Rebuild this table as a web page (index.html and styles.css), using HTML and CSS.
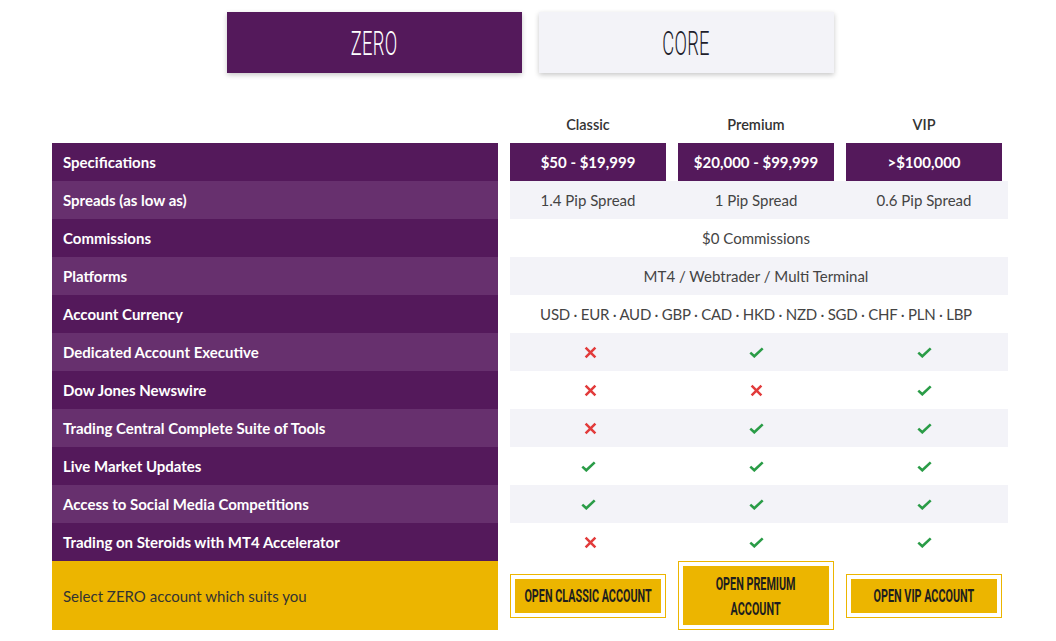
FILE: index.html
```html
<!DOCTYPE html>
<html>
<head>
<meta charset="utf-8">
<link rel="stylesheet" href="styles.css">
</head>
<body>
<div class="page">
  <div class="tabs">
    <div class="tab tab-active"><span class="tab-text">ZERO</span></div>
    <div class="tab"><span class="tab-text">CORE</span></div>
  </div>

  <div class="table">
    <div class="row row-head">
      <div class="label label-blank"></div>
      <div class="cells">
        <div class="cell">Classic</div>
        <div class="cell">Premium</div>
        <div class="cell">VIP</div>
      </div>
    </div>

    <div class="row row-spec">
      <div class="label">Specifications</div>
      <div class="cells">
        <div class="cell cell-spec">$50 - $19,999</div>
        <div class="cell cell-spec">$20,000 - $99,999</div>
        <div class="cell cell-spec">&gt;$100,000</div>
      </div>
    </div>

    <div class="row row-alt">
      <div class="label">Spreads (as low as)</div>
      <div class="cells">
        <div class="cell">1.4 Pip Spread</div>
        <div class="cell">1 Pip Spread</div>
        <div class="cell">0.6 Pip Spread</div>
      </div>
    </div>

    <div class="row">
      <div class="label">Commissions</div>
      <div class="cells">
        <div class="cell cell-span">$0 Commissions</div>
      </div>
    </div>

    <div class="row row-alt">
      <div class="label">Platforms</div>
      <div class="cells">
        <div class="cell cell-span">MT4 / Webtrader / Multi Terminal</div>
      </div>
    </div>

    <div class="row">
      <div class="label">Account Currency</div>
      <div class="cells">
        <div class="cell cell-span cell-cur">USD · EUR · AUD · GBP · CAD · HKD · NZD · SGD · CHF · PLN · LBP</div>
      </div>
    </div>

    <div class="row row-alt">
      <div class="label">Dedicated Account Executive</div>
      <div class="cells">
        <div class="cell"><svg class="ic-x" viewBox="0 0 13 13"><path d="M1.6 1.6L11.4 11.4M11.4 1.6L1.6 11.4"/></svg></div>
        <div class="cell"><svg class="ic-ok" viewBox="0 0 15 11"><path d="M1.3 5.6L5.3 9.3L13.7 1.4"/></svg></div>
        <div class="cell"><svg class="ic-ok" viewBox="0 0 15 11"><path d="M1.3 5.6L5.3 9.3L13.7 1.4"/></svg></div>
      </div>
    </div>

    <div class="row">
      <div class="label">Dow Jones Newswire</div>
      <div class="cells">
        <div class="cell"><svg class="ic-x" viewBox="0 0 13 13"><path d="M1.6 1.6L11.4 11.4M11.4 1.6L1.6 11.4"/></svg></div>
        <div class="cell"><svg class="ic-x" viewBox="0 0 13 13"><path d="M1.6 1.6L11.4 11.4M11.4 1.6L1.6 11.4"/></svg></div>
        <div class="cell"><svg class="ic-ok" viewBox="0 0 15 11"><path d="M1.3 5.6L5.3 9.3L13.7 1.4"/></svg></div>
      </div>
    </div>

    <div class="row row-alt">
      <div class="label">Trading Central Complete Suite of Tools</div>
      <div class="cells">
        <div class="cell"><svg class="ic-x" viewBox="0 0 13 13"><path d="M1.6 1.6L11.4 11.4M11.4 1.6L1.6 11.4"/></svg></div>
        <div class="cell"><svg class="ic-ok" viewBox="0 0 15 11"><path d="M1.3 5.6L5.3 9.3L13.7 1.4"/></svg></div>
        <div class="cell"><svg class="ic-ok" viewBox="0 0 15 11"><path d="M1.3 5.6L5.3 9.3L13.7 1.4"/></svg></div>
      </div>
    </div>

    <div class="row">
      <div class="label">Live Market Updates</div>
      <div class="cells">
        <div class="cell"><svg class="ic-ok" viewBox="0 0 15 11"><path d="M1.3 5.6L5.3 9.3L13.7 1.4"/></svg></div>
        <div class="cell"><svg class="ic-ok" viewBox="0 0 15 11"><path d="M1.3 5.6L5.3 9.3L13.7 1.4"/></svg></div>
        <div class="cell"><svg class="ic-ok" viewBox="0 0 15 11"><path d="M1.3 5.6L5.3 9.3L13.7 1.4"/></svg></div>
      </div>
    </div>

    <div class="row row-alt">
      <div class="label">Access to Social Media Competitions</div>
      <div class="cells">
        <div class="cell"><svg class="ic-ok" viewBox="0 0 15 11"><path d="M1.3 5.6L5.3 9.3L13.7 1.4"/></svg></div>
        <div class="cell"><svg class="ic-ok" viewBox="0 0 15 11"><path d="M1.3 5.6L5.3 9.3L13.7 1.4"/></svg></div>
        <div class="cell"><svg class="ic-ok" viewBox="0 0 15 11"><path d="M1.3 5.6L5.3 9.3L13.7 1.4"/></svg></div>
      </div>
    </div>

    <div class="row">
      <div class="label">Trading on Steroids with MT4 Accelerator</div>
      <div class="cells">
        <div class="cell"><svg class="ic-x" viewBox="0 0 13 13"><path d="M1.6 1.6L11.4 11.4M11.4 1.6L1.6 11.4"/></svg></div>
        <div class="cell"><svg class="ic-ok" viewBox="0 0 15 11"><path d="M1.3 5.6L5.3 9.3L13.7 1.4"/></svg></div>
        <div class="cell"><svg class="ic-ok" viewBox="0 0 15 11"><path d="M1.3 5.6L5.3 9.3L13.7 1.4"/></svg></div>
      </div>
    </div>

    <div class="row row-foot">
      <div class="label label-foot">Select ZERO account which suits you</div>
      <div class="cells">
        <div class="btn-wrap"><a class="btn"><span class="btn-text">OPEN CLASSIC ACCOUNT</span></a></div>
        <div class="btn-wrap btn-wrap-tall"><a class="btn"><span class="btn-text">OPEN PREMIUM<br>ACCOUNT</span></a></div>
        <div class="btn-wrap"><a class="btn"><span class="btn-text">OPEN VIP ACCOUNT</span></a></div>
      </div>
    </div>
  </div>
</div>
</body>
</html>
```

FILE: styles.css
```css
* { box-sizing: border-box; }

body {
  margin: 0;
  background: #ffffff;
  font-family: "Lato", "Open Sans", sans-serif;
  color: #444444;
}

.page {
  width: 956px;
  margin-left: 52px;
}

.tabs {
  display: flex;
  justify-content: center;
  gap: 17px;
  padding-top: 12px;
}

.tab {
  width: 295px;
  height: 61px;
  background: #f3f3f8;
  box-shadow: 0 2px 5px rgba(0, 0, 0, 0.22);
  display: flex;
  align-items: center;
  justify-content: center;
  color: #1d1d2b;
}

.tab-active {
  background: #54195b;
  color: #ffffff;
}

.tab-text {
  display: inline-block;
  font-family: "Roboto", sans-serif;
  font-weight: 300;
  font-size: 34px;
  line-height: 1;
  transform: scaleX(0.54);
  letter-spacing: 0.5px;
}

.table {
  margin-top: 32px;
}

.row {
  display: grid;
  grid-template-columns: 446px 1fr;
  column-gap: 12px;
  height: 38px;
}

.label {
  background: #54195b;
  color: #ffffff;
  font-weight: 700;
  font-size: 15px;
  padding-left: 11px;
  display: flex;
  align-items: center;
}

.row-alt .label {
  background: #67306e;
}

.label-blank {
  background: transparent;
}

.cells {
  display: grid;
  grid-template-columns: 156px 156px 156px;
  column-gap: 12px;
  padding-right: 6px;
}

.row-alt .cells {
  background: #f3f3f8;
}

.cell {
  display: flex;
  align-items: center;
  justify-content: center;
  font-size: 15px;
  color: #444444;
}

.cell-span {
  grid-column: 1 / 4;
}

.cell-cur {
  letter-spacing: -0.25px;
}

.row-head .cell {
  font-size: 14.5px;
  font-weight: 600;
  color: #333333;
}

.cell-spec {
  background: #54195b;
  color: #ffffff;
  font-weight: 700;
  font-size: 15px;
}

.ic-x {
  width: 13px;
  height: 13px;
  fill: none;
  stroke: #e23b3b;
  stroke-width: 2.5;
  margin-left: 4px;
}

.row .cell:not(:first-child) .ic-x {
  margin-left: 0;
}

.ic-ok {
  width: 15px;
  height: 11px;
  fill: none;
  stroke: #2a9c47;
  stroke-width: 2.6;
}

.row-foot {
  height: 69px;
}

.label-foot {
  background: #ecb500;
  color: #333333;
  font-weight: 400;
  font-size: 15px;
}

.row-foot .cells {
  align-items: center;
}

.btn-wrap {
  height: 44px;
  border: 1px solid #ecb500;
  padding: 4px;
}

.btn-wrap-tall {
  height: 69px;
}

.btn {
  height: 100%;
  background: #ecb500;
  display: flex;
  align-items: center;
  justify-content: center;
  text-align: center;
  color: #1e1e1e;
}

.btn-text {
  display: inline-block;
  font-family: "Roboto", sans-serif;
  font-weight: 700;
  font-size: 18px;
  line-height: 25px;
  transform: scaleX(0.6);
  white-space: nowrap;
}
```
